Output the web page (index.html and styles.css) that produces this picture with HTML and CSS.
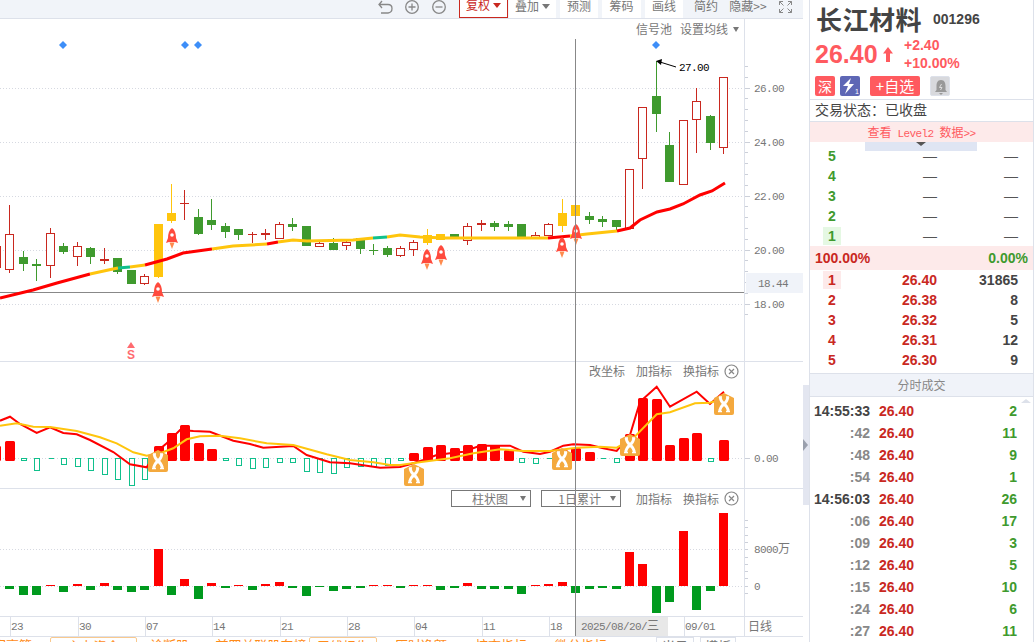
FILE: index.html
```html
<!DOCTYPE html>
<html lang="zh-CN">
<head>
<meta charset="utf-8">
<title>长江材料 001296</title>
<link rel="stylesheet" href="styles.css">
</head>
<body>
<svg class="defs" width="0" height="0" aria-hidden="true">
  <symbol id="rocket" viewBox="0 0 12 21">
    <path d="M6 0C9 2 10 6 10 10L12 15 9 14H3L0 15 2 10C2 6 3 2 6 0z" fill="#ff4a3d"/>
    <path d="M3.500 14.500H8.500L6 21z" fill="#ff8a4d"/>
    <circle cx="6" cy="7" r="1.800" fill="#fff"/>
  </symbol>
  <symbol id="xmark" viewBox="0 0 20 22">
    <path d="M10 0L20 5V20Q20 22 18 22H2Q0 22 0 20V5z" fill="#f4a93e"/>
    <path d="M6 4Q7 9 10 11T14.500 18M14 4Q13 9 10 11T5.500 18" fill="none" stroke="#fff" stroke-width="2.800"/>
    <path d="M4 18.500H8M12 18.500H16M5 4H8M12 4H15" stroke="#fff" stroke-width="1.500"/>
  </symbol>
  <symbol id="close" viewBox="0 0 15 15">
    <circle cx="7.500" cy="7.500" r="6.500" fill="none" stroke="#888" stroke-width="1.200"/>
    <path d="M5 5L10 10M10 5L5 10" stroke="#888" stroke-width="1.200"/>
  </symbol>
</svg>
<div class="app">
  <main class="chart">
    <div class="toolbar">
      <svg class="tool-icon undo" viewBox="0 0 15 14"><path d="M4 1L1 4.500 4 8M1 4.500H10Q14 4.500 14 8.500T10 13H3" fill="none" stroke="#888" stroke-width="1.300"/></svg>
      <svg class="tool-icon circle" viewBox="0 0 14 14"><circle cx="7" cy="7" r="6.300" fill="none" stroke="#888" stroke-width="1.300"/><path d="M3.500 7H10.500M7 3.500V10.500" stroke="#888" stroke-width="1.300"/></svg>
      <svg class="tool-icon circle" viewBox="0 0 14 14"><circle cx="7" cy="7" r="6.300" fill="none" stroke="#888" stroke-width="1.300"/><path d="M3.500 7H10.500" stroke="#888" stroke-width="1.300"/></svg>
      <div class="tool active w49">复权<i class="caret red"></i></div>
      <div class="tool w47">叠加<i class="caret"></i></div>
      <div class="tool w38 sp3">预测</div>
      <div class="tool w39 sp3">筹码</div>
      <div class="tool w38 sp3">画线</div>
      <div class="tool plain w38 sp3">简约</div>
      <div class="tool plain w38 sp3">隐藏&gt;&gt;</div>
      <svg class="tool-icon full" viewBox="0 0 13 12"><path d="M0.500 4V0.500H4M0.500 0.500L4.500 4.500M12.500 4V0.500H9M12.500 0.500L8.500 4.500M0.500 8V11.500H4M0.500 11.500L4.500 7.500M12.500 8V11.500H9M12.500 11.500L8.500 7.500" fill="none" stroke="#888"/></svg>
    </div>

    <div class="plot">
      <div class="axis-line"></div>

      <section class="pane main-pane">
        <svg viewBox="0 19 803 342" width="803" height="342">
          <path class="grid" d="M0 88.500H744M0 142.500H744M0 196.500H744M0 250.500H744M0 304.500H744"/>
          <path class="ticks" d="M746.500 66V315"/>
          <path class="ticks major" d="M745 88.500H750M745 142.500H750M745 196.500H750M745 250.500H750M745 304.500H750"/>
          <rect x="746" y="273" width="57" height="20" class="price-tag"/>
          <text class="axis" x="754" y="92">26.00</text>
          <text class="axis" x="754" y="146">24.00</text>
          <text class="axis" x="754" y="200">22.00</text>
          <text class="axis" x="754" y="254">20.00</text>
          <text class="axis" x="758" y="287">18.44</text>
          <text class="axis" x="754" y="308">18.00</text>
          <path class="hair" d="M0 292.500H744"/>

          <path class="diamond" d="M59 45l4-4 4 4-4 4zM181 45l4-4 4 4-4 4zM194 45l4-4 4 4-4 4zM652 45l4-4 4 4-4 4z"/>

          <path class="wick-red" d="M9.500 205V234M9.500 269V273M50.500 228V233M50.500 265V278M77.500 242V246M77.500 256V266M104.500 248V264M144.500 274V276M144.500 283V285M184.500 190V220M252.500 232V243M265.500 229V240M279.500 222V224M279.500 238V239M319.500 240V243M319.500 246V247M346.500 240V242M346.500 245V250M400.500 246V248M400.500 255V257M413.500 240V242M413.500 249V256M467.500 223V226M467.500 240V245M481.500 220V231M535.500 232V235M548.500 223V224M642.500 158V189M696.500 88V101M696.500 119V153M723.500 147V154"/>
          <path class="body-red" d="M-8.500 246.500h9v21h-9zM5.500 234.500h8v35h-8zM46.500 233.500h8v32h-8zM73.500 246.500h8v10h-8zM140.500 276.500h8v7h-8zM275.500 224.500h8v14h-8zM315.500 243.500h8v3h-8zM342.500 242.500h8v3h-8zM396.500 248.500h8v7h-8zM409.500 242.500h8v7h-8zM463.500 226.500h8v14h-8zM531.500 235.500h8v3h-8zM544.500 224.500h8v11h-8zM625.500 169.500h8v59h-8zM638.500 107.500h8v51h-8zM679.500 120.500h8v64h-8zM692.500 101.500h8v18h-8zM719.500 77.500h8v70h-8z"/>
          <path class="fill-red" d="M100 259h9v2h-9zM180 203h9v1h-9zM248 234h9v1h-9zM261 233h9v2h-9zM477 223h9v2h-9z"/>

          <path class="wick-green" d="M23.500 251V271M36.500 259V281M63.500 243V254M90.500 247V264M117.500 258V274M198.500 209V235M211.500 199V230M225.500 223V238M238.500 229V240M292.500 218V231M333.500 238V250M360.500 238V254M373.500 244V255M387.500 246V257M494.500 221V231M508.500 221V231M589.500 212V224M602.500 216V227M616.500 220V230M656.500 61V132M669.500 132V182M710.500 115V150"/>
          <path class="fill-green" d="M19 257h9v7h-9zM32 264h9v2h-9zM59 246h9v6h-9zM86 248h9v9h-9zM113 258h9v14h-9zM127 270h9v14h-9zM194 217h9v17h-9zM207 220h9v5h-9zM221 226h9v6h-9zM234 229h9v6h-9zM288 224h9v3h-9zM302 226h9v20h-9zM329 243h9v7h-9zM356 238h9v11h-9zM369 250h9v1h-9zM383 248h9v7h-9zM450 234h9v4h-9zM490 223h9v4h-9zM504 224h9v3h-9zM517 224h9v13h-9zM585 216h9v4h-9zM598 219h9v3h-9zM612 220h9v7h-9zM652 96h9v18h-9zM665 145h9v37h-9zM706 116h9v27h-9z"/>

          <path class="wick-yellow" d="M158.500 277V278M171.500 184V223M427.500 229V245M562.500 199V232M575.500 216V245"/>
          <path class="fill-yellow" d="M154 224h9v53h-9zM167 213h9v8h-9zM423 235h9v8h-9zM436 234h9v6h-9zM558 213h9v13h-9zM571 205h9v11h-9z"/>

          <polyline class="ma ma-red" points="0,298 33,290 57,283 90,274"/>
          <polyline class="ma ma-yellow" points="90,274 113,269 118,268"/>
          <polyline class="ma ma-teal" points="118,268 130,267"/>
          <polyline class="ma ma-yellow" points="130,267 145,265"/>
          <polyline class="ma ma-red" points="145,265 167,259 183,253 212,249"/>
          <polyline class="ma ma-yellow" points="212,249 233,246 267,244"/>
          <polyline class="ma ma-red" points="267,244 278,242"/>
          <polyline class="ma ma-yellow" points="278,242 293,240 307,241 353,240 373,238"/>
          <polyline class="ma ma-teal" points="373,238 387,237"/>
          <polyline class="ma ma-yellow" points="387,237 400,235 420,237 445,238 548,238"/>
          <polyline class="ma ma-red" points="548,238 570,236"/>
          <polyline class="ma ma-yellow" points="570,236 587,234 617,231"/>
          <polyline class="ma ma-red" points="617,231 630,228 640,220 657,212 670,209 683,204 700,195 712,191 725,183"/>

          <use href="#rocket" x="152" y="282" width="12" height="21"/>
          <use href="#rocket" x="166" y="228" width="12" height="21"/>
          <use href="#rocket" x="421" y="249" width="12" height="21"/>
          <use href="#rocket" x="435" y="245" width="12" height="21"/>
          <use href="#rocket" x="556" y="237" width="12" height="21"/>
          <use href="#rocket" x="570" y="224" width="12" height="21"/>

          <path class="signal" d="M131 342l4 6h-8z"/>
          <text class="signal-s" x="131" y="359">S</text>

          <path class="note-line" d="M660 62L676 67"/>
          <path class="note-head" d="M656 61L662 59 661 65z"/>
          <text class="note" x="679" y="71">27.00</text>
        </svg>
        <div class="pane-tools top-tools"><span>信号池</span><span>设置均线</span><i class="caret"></i></div>
      </section>

      <section class="pane macd-pane">
        <svg viewBox="0 362 803 126" width="803" height="126">
          <path class="grid" d="M0 458.500H744"/>
          <path class="ticks major" d="M745 458.500H750"/>
          <text class="axis" x="754" y="462">0.00</text>
          <path class="macd-up" d="M-7.500 447.500h7V459.500h-7zM6.500 442.500h7V459.500h-7zM155.500 447.500h7V459.500h-7zM168.500 434.500h7V459.500h-7zM181.500 426.500h7V459.500h-7zM195.500 444.500h7V459.500h-7zM208.500 450.500h7V459.500h-7zM410.500 454.500h7V459.500h-7zM424.500 448.500h7V459.500h-7zM437.500 446.500h7V459.500h-7zM451.500 449.500h7V459.500h-7zM464.500 446.500h7V459.500h-7zM478.500 445.500h7V459.500h-7zM491.500 446.500h7V459.500h-7zM505.500 451.500h7V459.500h-7zM559.500 451.500h7V459.500h-7zM572.500 449.500h7V459.500h-7zM586.500 453.500h7V459.500h-7zM626.500 435.500h7V459.500h-7zM639.500 399.500h7V459.500h-7zM653.500 400.500h7V459.500h-7zM666.500 446.500h7V459.500h-7zM680.500 439.500h7V459.500h-7zM693.500 434.500h7V459.500h-7zM720.500 441.500h7V459.500h-7z"/>
          <path class="macd-down" d="M21.500 458.500h5V460.500h-5zM34.500 458.500h5V470.500h-5zM48.500 458.500h5M61.500 458.500h5V464.500h-5zM75.500 458.500h5V466.500h-5zM88.500 458.500h5V470.500h-5zM102.500 458.500h5V474.500h-5zM115.500 458.500h5V479.500h-5zM129.500 458.500h5V485.500h-5zM142.500 458.500h5V479.500h-5zM223.500 458.500h5V460.500h-5zM236.500 458.500h5V465.500h-5zM250.500 458.500h5V468.500h-5zM263.500 458.500h5V467.500h-5zM277.500 458.500h5V462.500h-5zM290.500 458.500h5V462.500h-5zM304.500 458.500h5V471.500h-5zM317.500 458.500h5V472.500h-5zM331.500 458.500h5V473.500h-5zM344.500 458.500h5V467.500h-5zM358.500 458.500h5V466.500h-5zM371.500 458.500h5V466.500h-5zM385.500 458.500h5V465.500h-5zM398.500 458.500h5V460.500h-5zM519.500 458.500h5V462.500h-5zM533.500 458.500h5V463.500h-5zM546.500 458.500h5M600.500 458.500h5M614.500 458.500h5V462.500h-5zM708.500 458.500h5V461.500h-5z"/>
          <polyline class="dif" points="0,420.700 10,416.700 20,424 36.700,433 50,427.300 63.300,433 76.700,434.300 90,440 113.300,452 130,464.300 146.700,467.300 156.700,451.700 166.700,443.300 180,430 193.300,431 210,431.700 233.300,440.700 250,444 263.300,447.700 293.300,446 306.700,455 330,462.300 350,463.300 380,467.700 400,467 410,464.300 423.300,460 436.700,455 450,453.300 463.300,451.700 480,445.700 510,445.700 523.300,451.700 540,454 550,451.700 563.300,445.700 573.300,444.300 590,445 603.300,448.300 616.700,451 630,435 640,401.700 656.700,386.700 670,406.700 696.700,391.700 710,404 724,391.700"/>
          <polyline class="dea" points="0,425.700 16.700,423.300 33.300,426.700 50,427 76.700,431 100,437.300 116.700,443.300 133.300,452.300 146.700,455.700 160,453.300 173.300,448.300 186.700,439.300 200,436.300 220,435.700 240,438.300 266.700,443.300 293.300,445 326.700,454.300 350,460 373.300,462.300 390,465 400,465 423.300,461.700 450,458.300 473.300,453.300 500,449.300 523.300,451 550,451 576.700,447.700 600,446.700 616.700,447.700 633.300,438.300 656.700,414.300 670,412.300 695,403.300 710,402.700 724,398.300"/>
          <use href="#xmark" x="148" y="450" width="20" height="22"/>
          <use href="#xmark" x="404" y="464" width="20" height="22"/>
          <use href="#xmark" x="552" y="448" width="20" height="22"/>
          <use href="#xmark" x="620" y="434" width="20" height="22"/>
          <use href="#xmark" x="714" y="393" width="20" height="22"/>
        </svg>
        <div class="pane-tools"><span>改坐标</span><span>加指标</span><span>换指标</span><svg class="close" viewBox="0 0 15 15"><use href="#close"/></svg></div>
      </section>

      <section class="pane vol-pane">
        <svg viewBox="0 489 803 127" width="803" height="127">
          <path class="grid" d="M0 549.500H744M0 586.500H744"/>
          <path class="ticks vol" d="M746.500 520V600"/>
          <text class="axis" x="754" y="553">8000<tspan class="cjk">万</tspan></text>
          <text class="axis" x="754" y="590">0</text>
          <path class="vol-green" d="M5 586h9v3h-9zM19 586h9v9h-9zM32 586h9v9h-9zM59 586h9v6h-9zM86 586h9v4h-9zM113 586h9v4h-9zM127 586h9v6h-9zM140 586h9v4h-9zM167 586h9v9h-9zM194 586h9v13h-9zM221 586h9v2h-9zM248 586h9v4h-9zM288 586h9v2h-9zM302 586h9v10h-9zM315 586h9v1h-9zM329 586h9v5h-9zM342 586h9v3h-9zM356 586h9v2h-9zM396 586h9v2h-9zM436 586h9v4h-9zM450 586h9v2h-9zM477 586h9v3h-9zM490 586h9v3h-9zM504 586h9v3h-9zM517 586h9v8h-9zM571 586h9v7h-9zM585 586h9v3h-9zM598 586h9v2h-9zM612 586h9v3h-9zM652 586h9v27h-9zM665 586h9v16h-9zM692 586h9v24h-9zM706 586h9v5h-9z"/>
          <path class="vol-red" d="M46 585h9v1h-9zM73 584h9v2h-9zM100 583h9v3h-9zM154 549h9v37h-9zM180 579h9v7h-9zM207 583h9v3h-9zM234 585h9v1h-9zM261 584h9v2h-9zM275 582h9v4h-9zM369 585h9v1h-9zM383 585h9v1h-9zM409 585h9v1h-9zM423 585h9v1h-9zM463 583h9v3h-9zM531 585h9v1h-9zM544 584h9v2h-9zM558 582h9v4h-9zM625 552h9v34h-9zM638 564h9v22h-9zM679 531h9v55h-9zM719 513h9v73h-9z"/>
        </svg>
        <div class="pane-tools vol-tools">
          <div class="select s-a">柱状图<i class="caret"></i></div>
          <div class="select s-b">1日累计<i class="caret"></i></div>
          <span>加指标</span><span>换指标</span><svg class="close" viewBox="0 0 15 15"><use href="#close"/></svg>
        </div>
      </section>

      <section class="date-axis">
        <svg viewBox="0 617 803 19" width="803" height="19">
          <path class="date-ticks" d="M10.500 617V636M78.500 617V636M145.500 617V636M212.500 617V636M280.500 617V636M347.500 617V636M414.500 617V636M482.500 617V636M549.500 617V636M684.500 617V636"/>
          <rect x="575" y="617" width="93" height="19" class="date-tag"/>
          <text class="axis" x="11" y="630">23</text>
          <text class="axis" x="79" y="630">30</text>
          <text class="axis" x="146" y="630">07</text>
          <text class="axis" x="213" y="630">14</text>
          <text class="axis" x="281" y="630">21</text>
          <text class="axis" x="348" y="630">28</text>
          <text class="axis" x="415" y="630">04</text>
          <text class="axis" x="483" y="630">11</text>
          <text class="axis" x="550" y="630">18</text>
          <text class="axis" x="581" y="630">2025/08/20/<tspan class="cjk">三</tspan></text>
          <text class="axis" x="685" y="630">09/01</text>
          <text class="axis cjk" x="748" y="631">日线</text>
        </svg>
      </section>

      <div class="crosshair"></div>
    </div>

    <nav class="tabs">
      <span class="tab t-a">大宗高管</span>
      <span class="tab boxed t-b">主力资金</span>
      <span class="tab t-c">诊断股</span>
      <span class="tab t-d">前四关联股东榜</span>
      <span class="tab boxed t-e">三线报告</span>
      <span class="tab t-f">历时净额</span>
      <span class="tab t-g">核查指标</span>
      <span class="tab t-h">微分指标</span>
      <span class="tab grey t-i">当日</span>
      <span class="tab grey t-j">模板</span>
    </nav>
  </main>

  <div class="sash"><div class="sash-handle"><i></i></div></div>

  <aside class="panel">
    <header class="quote">
      <div class="name-row"><h1>长江材料</h1><span class="code">001296</span></div>
      <div class="price-row">
        <span class="price">26.40</span>
        <svg class="up" viewBox="0 0 10 15"><path d="M5 0L10 6.500H7V15H3V6.500H0z"/></svg>
        <div class="delta"><span>+2.40</span><span>+10.00%</span></div>
      </div>
      <div class="badges">
        <span class="badge red">深</span>
        <span class="badge indigo"><svg viewBox="0 0 20 20" width="20" height="20"><path d="M11 2L3 10H8L5 18 14 8H9z" fill="#fff"/><text x="15" y="18" class="badge-num">1</text></svg></span>
        <span class="badge red wide">+自选</span>
        <span class="badge grey"><svg viewBox="0 0 20 20" width="20" height="20"><path d="M10 3C6.500 3 5.500 6 5.500 9V13L4 15H16L14.500 13V9C14.500 6 13.500 3 10 3zM8 16H12L10 18z" fill="#999"/><path d="M10.500 7L8.500 10.500H11L9.500 13" fill="none" stroke="#ddd"/></svg></span>
      </div>
    </header>
    <div class="status">交易状态：已收盘</div>
    <div class="level2">查看<span class="lat"> Level2 </span>数据<span class="lat">&gt;&gt;</span></div>
    <div class="book asks">
      <div class="fold"><i></i></div>
      <div class="row"><b class="n g">5</b><span>—</span><span>—</span></div>
      <div class="row"><b class="n g">4</b><span>—</span><span>—</span></div>
      <div class="row"><b class="n g">3</b><span>—</span><span>—</span></div>
      <div class="row"><b class="n g">2</b><span>—</span><span>—</span></div>
      <div class="row"><b class="n g on-g">1</b><span>—</span><span>—</span></div>
    </div>
    <div class="ratio"><span class="r">100.00%</span><span class="g">0.00%</span></div>
    <div class="book bids">
      <div class="row"><b class="n r on-r">1</b><b class="r">26.40</b><b class="v">31865</b></div>
      <div class="row"><b class="n r">2</b><b class="r">26.38</b><b class="v">8</b></div>
      <div class="row"><b class="n r">3</b><b class="r">26.32</b><b class="v">5</b></div>
      <div class="row"><b class="n r">4</b><b class="r">26.31</b><b class="v">12</b></div>
      <div class="row"><b class="n r">5</b><b class="r">26.30</b><b class="v">9</b></div>
    </div>
    <div class="trades-head">分时成交</div>
    <div class="trades">
      <i class="scroll-up"></i>
      <div class="trade"><b class="t">14:55:33</b><b class="r">26.40</b><b class="g">2</b></div>
      <div class="trade"><b class="s">:42</b><b class="r">26.40</b><b class="g">11</b></div>
      <div class="trade"><b class="s">:48</b><b class="r">26.40</b><b class="g">9</b></div>
      <div class="trade"><b class="s">:54</b><b class="r">26.40</b><b class="g">1</b></div>
      <div class="trade"><b class="t">14:56:03</b><b class="r">26.40</b><b class="g">26</b></div>
      <div class="trade"><b class="s">:06</b><b class="r">26.40</b><b class="g">17</b></div>
      <div class="trade"><b class="s">:09</b><b class="r">26.40</b><b class="g">3</b></div>
      <div class="trade"><b class="s">:12</b><b class="r">26.40</b><b class="g">5</b></div>
      <div class="trade"><b class="s">:15</b><b class="r">26.40</b><b class="g">10</b></div>
      <div class="trade"><b class="s">:24</b><b class="r">26.40</b><b class="g">6</b></div>
      <div class="trade"><b class="s">:27</b><b class="r">26.40</b><b class="g">11</b></div>
    </div>
  </aside>
</div>
</body>
</html>
```

FILE: styles.css
```css
* { box-sizing: border-box; }
html, body { margin: 0; height: 642px; overflow: hidden; background: #fff; }
body { font: 12px "Noto Sans CJK SC", "Liberation Sans", sans-serif; color: #666; }
.defs { position: absolute; }
.app { display: flex; width: 1035px; height: 642px; overflow: hidden; }
.chart { width: 803px; flex: none; display: flex; flex-direction: column; }

/* toolbar */
.toolbar { height: 19px; background: #f1f4f9; border-bottom: 1px solid #dde1ea; display: flex; align-items: flex-end; justify-content: flex-end; padding-right: 11px; overflow: hidden; }
.tool-icon { flex: none; align-self: flex-start; }
.undo { width: 15px; height: 14px; margin-right: 12px; }
.circle { width: 14px; height: 14px; margin-right: 13px; }
.full { width: 13px; height: 12px; margin: 1px 0 0 12px; }
.tool { flex: none; height: 24px; margin-top: -6px; background: #fff; text-align: center; color: #777; display: flex; align-items: flex-end; justify-content: center; gap: 3px; padding-bottom: 5px; line-height: 14px; font-size: 12px; }
.active { border: 1px solid #c9281f; color: #c9281f; padding-bottom: 5px; }
.plain { background: transparent; }
.w49 { width: 49px; margin-right: 1px; }
.w47 { width: 47px; }
.w39 { width: 39px; }
.w38 { width: 38px; }
.sp3 { margin-left: 4px; }
.caret { display: inline-block; width: 0; height: 0; border: 4px solid transparent; border-top: 5px solid #777; border-bottom: 0; margin-bottom: 4px; }
.caret.red { border-top-color: #c9281f; }

/* plot panes */
.plot { position: relative; }
.pane { position: relative; border-bottom: 1px solid #dde1ea; }
.pane svg, .date-axis svg { display: block; }
.date-axis { border-bottom: 1px solid #dde1ea; height: 20px; }
.axis-line { position: absolute; left: 744px; top: 0; width: 1px; height: 617px; background: #dde1ea; }
.crosshair { position: absolute; left: 575px; top: 20px; width: 1px; height: 597px; background: #888; }
.grid { stroke: #d6d9e1; stroke-dasharray: 1 2; fill: none; }
.ticks { stroke: #ccd0d9; stroke-width: 3; stroke-dasharray: 1 9.800; fill: none; shape-rendering: crispEdges; }
.ticks.vol { stroke-dasharray: 1 6.300; }
.ticks.major { stroke-width: 1; stroke-dasharray: none; }
.hair { stroke: #888; fill: none; shape-rendering: crispEdges; }
.price-tag { fill: #f0f3f9; }
.date-tag { fill: #e8e8e8; }
.date-ticks { stroke: #dde1ea; shape-rendering: crispEdges; }
.axis { font: 11px "Liberation Mono", monospace; letter-spacing: -.6px; fill: #777; }
.cjk { font-family: "Noto Sans CJK SC", sans-serif; font-size: 12px; letter-spacing: 0; }
.diamond { fill: #3d8ef8; }
.wick-red { stroke: #c9281f; fill: none; shape-rendering: crispEdges; }
.body-red { stroke: #c9281f; fill: #fff; shape-rendering: crispEdges; }
.fill-red { fill: #c9281f; shape-rendering: crispEdges; }
.wick-green { stroke: #3f9a2e; fill: none; shape-rendering: crispEdges; }
.fill-green { fill: #3f9a2e; shape-rendering: crispEdges; }
.wick-yellow { stroke: #ffc50d; fill: none; shape-rendering: crispEdges; }
.fill-yellow { fill: #ffc50d; shape-rendering: crispEdges; }
.ma { fill: none; stroke-width: 3; }
.ma-red { stroke: #f00; }
.ma-yellow { stroke: #ffc50d; }
.ma-teal { stroke: #10c08c; }
.signal { fill: #ff6b70; }
.signal-s { font: bold 12px "Liberation Sans", sans-serif; fill: #ff6b70; text-anchor: middle; }
.note-line { stroke: #000; fill: none; }
.note-head { fill: #000; }
.note { font: 11px "Liberation Mono", monospace; letter-spacing: -.6px; fill: #000; }
.macd-up { fill: #f00; stroke: #f00; stroke-width: 3; stroke-linejoin: round; }
.macd-down { fill: #fff; stroke: #10c08c; shape-rendering: crispEdges; }
.dif { fill: none; stroke: #f00; stroke-width: 2; }
.dea { fill: none; stroke: #ffc50d; stroke-width: 2; }
.vol-red { fill: #f00; shape-rendering: crispEdges; }
.vol-green { fill: #009a1e; shape-rendering: crispEdges; }
.pane-tools { position: absolute; top: 1px; right: 64px; display: flex; align-items: center; gap: 11px; color: #777; line-height: 16px; white-space: nowrap; }
.top-tools { top: 2px; right: 64px; gap: 8px; }
.top-tools .caret { margin: 0 0 0 -3px; border-width: 3px; border-top-width: 5px; border-bottom: 0; }
.close { width: 15px; height: 15px; margin-left: -6px; }
.macd-pane .pane-tools { top: 1px; }
.vol-tools { top: 1px; }
.select { position: relative; height: 17px; width: 80px; border: 1px solid #777; line-height: 15px; margin-right: -1px; text-align: right; }
.select .caret { position: absolute; right: 4px; top: 5px; margin: 0; border-width: 3px; border-top-width: 5px; border-bottom: 0; }
.s-a { padding-right: 22px; }
.s-b { padding-right: 19px; margin-right: 4px; }

/* bottom tabs */
.tabs { height: 5px; display: flex; overflow: hidden; }
.tab { flex: none; height: 22px; color: #ff8c1a; text-align: center; line-height: 16px; font-size: 13px; }
.boxed { border: 1px solid #f9c98e; border-radius: 2px 2px 0 0; }
.grey { color: #777; border: 1px solid #dde1ea; }
.t-a { margin-left: -20px; width: 70px; text-align: left; }
.t-b { width: 87px; }
.t-c { width: 55px; margin-left: 5px; }
.t-d { width: 96px; margin-left: 16px; }
.t-e { width: 68px; }
.t-f { width: 56px; margin-left: 16px; }
.t-g { width: 56px; margin-left: 24px; }
.t-h { width: 56px; margin-left: 24px; }
.t-i { width: 38px; margin-left: 47px; }
.t-j { width: 36px; margin-left: 6px; }

/* sash */
.sash { width: 6px; flex: none; position: relative; }
.sash-handle { position: absolute; left: 0; top: 385px; width: 6px; height: 120px; background: #e3e6f0; display: flex; align-items: center; }
.sash-handle i { width: 0; height: 0; border: 6px solid transparent; border-left: 5px solid #9aa0ad; border-right: 0; }

/* right panel */
.panel { width: 225px; flex: none; border-left: 1px solid #dde1ea; border-right: 1px solid #dde1ea; height: 642px; color: #444; overflow: hidden; }
.quote { height: 100px; border-bottom: 1px solid #dde1ea; padding: 4px 0 0 6px; }
.name-row { display: flex; align-items: center; height: 30px; }
h1 { margin: 0; font-size: 26px; font-weight: 700; line-height: 30px; letter-spacing: .5px; color: #444; }
.code { font: bold 14px "Liberation Sans", sans-serif; margin-left: 11px; color: #444; }
.price-row { display: flex; align-items: center; height: 38px; margin-top: 1px; margin-left: -1px; color: #ff5a5f; }
.price { font: bold 25px "Liberation Sans", sans-serif; width: 66px; }
.up { width: 10px; height: 15px; fill: #ff5a5f; margin-left: 2px; }
.delta { display: flex; flex-direction: column; margin-left: 11px; font: bold 14px/18px "Liberation Sans", sans-serif; }
.badges { display: flex; margin-top: 3px; margin-left: -1px; gap: 5px; }
.badge { width: 20px; height: 20px; border-radius: 2px; color: #fff; text-align: center; font-size: 14px; line-height: 20px; display: block; }
.badge svg { display: block; }
.badge.red { background: #ff5a5f; }
.badge.indigo { background: #5e67b5; }
.badge.wide { width: 50px; margin-left: 5px; font-size: 15px; }
.badge.grey { background: #d8d9dd; margin-left: 5px; }
.badge-num { font: 7px "Liberation Sans", sans-serif; fill: #fff; }
.status { height: 22px; border-bottom: 1px solid #dde1ea; padding-left: 5px; font-size: 14px; line-height: 19px; color: #444; }
.level2 { height: 20px; background: #fdeaea; color: #ff5a5f; text-align: center; line-height: 20px; font-size: 12px; }
.lat { font: 11px "Liberation Mono", monospace; letter-spacing: -.6px; }
.book { position: relative; font: 14px "Liberation Sans", sans-serif; }
.asks { height: 104px; padding-top: 4px; }
.bids { height: 104px; border-bottom: 1px solid #dde1ea; }
.fold { position: absolute; left: 55px; top: 0; width: 112px; height: 9px; background: #dfe5f3; display: flex; justify-content: center; }
.fold i { width: 0; height: 0; border: 5px solid transparent; border-top: 4px solid #555; border-bottom: 0; }
.row { display: grid; grid-template-columns: 18px 96px 81px; margin-left: 13px; height: 20px; align-items: center; text-align: right; color: #555; line-height: 18px; }
.n { text-align: center; height: 18px; }
.on-g { background: #e5f8e3; }
.on-r { background: #fdeaea; }
.r { color: #c9281f; }
.g { color: #3f9a2e; }
.v { color: #444; }
.ratio { height: 24px; background: #fdeaea; display: flex; justify-content: space-between; padding: 0 5px; align-items: center; font: bold 14px "Liberation Sans", sans-serif; }
.trades-head { height: 23px; background: #f0f3f9; border-bottom: 1px solid #dde1ea; text-align: center; color: #888; line-height: 22px; font-size: 12px; }
.trades { position: relative; padding-top: 3px; font: 14px "Liberation Sans", sans-serif; }
.scroll-up { position: absolute; right: 2px; top: 2px; width: 0; height: 0; border: 5px solid transparent; border-bottom: 4px solid #dde1ea; border-top: 0; }
.trade { display: grid; grid-template-columns: 60px 44px 103px; height: 22px; align-items: center; }
.trade > :first-child { text-align: right; }
.trade > .r { padding-left: 9px; }
.trade > .g { text-align: right; }
.t { color: #444; }
.s { color: #888; }
```
